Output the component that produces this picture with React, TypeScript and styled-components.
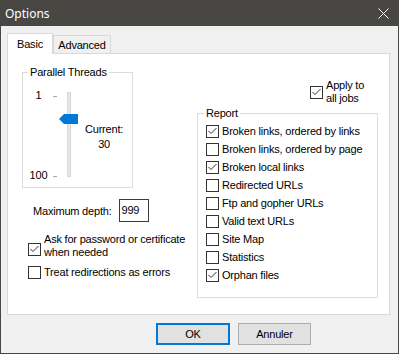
import React from 'react';
import styled, { createGlobalStyle } from 'styled-components';

const GlobalStyle = createGlobalStyle`
  html, body {
    margin: 0;
    padding: 0;
    background: #f0f0f0;
  }
  body {
    font-family: "Liberation Sans", Arial, sans-serif;
    font-size: 11px;
    letter-spacing: -0.2px;
    color: #000;
  }
`;

const Window = styled.div`
  width: 399px;
  height: 354px;
  box-sizing: border-box;
  border: 1px solid #484744;
  border-top: none;
  background: #f0f0f0;
  display: flex;
  flex-direction: column;
`;

const TitleBar = styled.div`
  height: 26px;
  background: #484744;
  display: flex;
  align-items: center;
  justify-content: space-between;
  padding: 0 9px 0 4px;
  color: #fff;
  font-family: "Noto Sans", "Open Sans", sans-serif;
  font-size: 12px;
  letter-spacing: 0;
`;

const TabStrip = styled.div`
  display: flex;
  align-items: flex-end;
  padding-left: 6px;
  margin-top: 7px;
  height: 20px;
`;

const Tab = styled.div<{ $active?: boolean; $width: number }>`
  position: relative;
  z-index: ${(p) => (p.$active ? 1 : 0)};
  box-sizing: border-box;
  width: ${(p) => p.$width}px;
  height: ${(p) => (p.$active ? 21 : 18)}px;
  margin-bottom: ${(p) => (p.$active ? -1 : 0)}px;
  border: 1px solid #d9d9d9;
  border-bottom: none;
  background: ${(p) => (p.$active ? '#fff' : '#f0f0f0')};
  display: flex;
  align-items: center;
  justify-content: center;
  padding-bottom: ${(p) => (p.$active ? 1 : 0)}px;
`;

const TabPanel = styled.div`
  margin: 0 8px 0 6px;
  height: 262px;
  box-sizing: border-box;
  border: 1px solid #d9d9d9;
  background: #fff;
  display: grid;
  grid-template-columns: 175px 181px;
  align-items: start;
  padding: 12px 0 0 14px;
`;

const Column = styled.div`
  display: flex;
  flex-direction: column;
  align-items: flex-start;
`;

const Group = styled.fieldset<{ $width: number; $padTop: number; $padBottom: number; $top?: number }>`
  box-sizing: border-box;
  width: ${(p) => p.$width}px;
  margin: ${(p) => p.$top ?? 0}px 0 0 0;
  padding: ${(p) => `${p.$padTop}px 0 ${p.$padBottom}px 0`};
  border: 1px solid #dcdcdc;
  min-width: 0;
`;

const Legend = styled.legend<{ $indent: number }>`
  padding: 0 2px;
  margin-left: ${(p) => p.$indent}px;
  line-height: 13px;
`;

const SliderRow = styled.div`
  display: flex;
  align-items: flex-start;
  padding-left: 5px;
`;

const ScaleLabels = styled.div`
  width: 21px;
  height: 93px;
  display: flex;
  flex-direction: column;
  justify-content: space-between;
  align-items: center;
  line-height: 13px;
`;

const Ticks = styled.div`
  width: 4px;
  height: 81px;
  margin: 7px 0 0 4px;
  display: flex;
  flex-direction: column;
  justify-content: space-between;
`;

const Tick = styled.div`
  height: 1px;
  background: #a8a8a8;
`;

const Track = styled.div`
  position: relative;
  box-sizing: border-box;
  width: 4px;
  height: 85px;
  margin: 3px 0 0 10px;
  background: #e7e7e7;
  border: 1px solid #d6d6d6;
`;

const Thumb = styled.svg`
  position: absolute;
  left: -9px;
  display: block;
`;

const CurrentBlock = styled.div`
  margin: 33px 0 0 14px;
  text-align: center;
  line-height: 15px;
`;

const DepthRow = styled.div`
  display: flex;
  align-items: center;
  margin: 11px 0 0 11px;
  gap: 7px;
`;

const NumberBox = styled.div`
  box-sizing: border-box;
  width: 30px;
  height: 23px;
  border: 1px solid #3c3c3c;
  background: #fff;
  padding: 0 0 0 2px;
  line-height: 21px;
`;

const CheckRow = styled.label<{ $top: number; $left: number }>`
  display: flex;
  align-items: center;
  gap: 3px;
  margin: ${(p) => `${p.$top}px 0 0 ${p.$left}px`};
  line-height: 13px;
`;

const Box = styled.span<{ $nudge?: number }>`
  box-sizing: border-box;
  flex: none;
  width: 13px;
  height: 13px;
  border: 1px solid #333;
  background: #fff;
  margin-top: ${(p) => p.$nudge ?? 0}px;
  display: flex;
`;

const ReportRow = styled.div`
  display: flex;
  align-items: center;
  gap: 3px;
  height: 18px;
  padding-left: 8px;
`;

const ButtonRow = styled.div`
  display: flex;
  gap: 8px;
  padding-left: 155px;
  margin-top: 8px;
`;

const Button = styled.div<{ $default?: boolean; $width: number }>`
  box-sizing: border-box;
  width: ${(p) => p.$width}px;
  height: 22px;
  border: ${(p) => (p.$default ? '2px solid #0078d7' : '1px solid #adadad')};
  background: #e1e1e1;
  display: flex;
  align-items: center;
  justify-content: center;
`;

const Check: React.FC<{ checked?: boolean; nudge?: number }> = ({ checked, nudge }) => (
  <Box $nudge={nudge}>
    {checked && (
      <svg width="11" height="11" viewBox="0 0 11 11">
        <polyline points="1.5,5 4,7.5 9.5,2" fill="none" stroke="#333" strokeWidth="1" />
      </svg>
    )}
  </Box>
);

const reportItems: [string, boolean][] = [
  ['Broken links, ordered by links', true],
  ['Broken links, ordered by page', false],
  ['Broken local links', true],
  ['Redirected URLs', false],
  ['Ftp and gopher URLs', false],
  ['Valid text URLs', false],
  ['Site Map', false],
  ['Statistics', false],
  ['Orphan files', true],
];

const threads = { min: 1, max: 100, current: 30 };

export default function App() {
  // thumb offset inside the track for the current value
  const thumbTop = Math.round(((threads.current - threads.min) / (threads.max - threads.min)) * 71);
  return (
    <>
      <GlobalStyle />
      <Window>
        <TitleBar>
          <span>Options</span>
          <svg width="11" height="11" viewBox="0 0 11 11">
            <path d="M0.5 0.5 L10.5 10.5 M10.5 0.5 L0.5 10.5" stroke="#fff" strokeWidth="1" />
          </svg>
        </TitleBar>

        <TabStrip>
          <Tab $active $width={46}>Basic</Tab>
          <Tab $width={58}>Advanced</Tab>
        </TabStrip>

        <TabPanel>
          <Column>
            <Group $width={111} $padTop={10} $padBottom={5}>
              <Legend $indent={5}>Parallel Threads</Legend>
              <SliderRow>
                <ScaleLabels>
                  <span>{threads.min}</span>
                  <span>{threads.max}</span>
                </ScaleLabels>
                <Ticks>
                  <Tick />
                  <Tick />
                </Ticks>
                <Track>
                  <Thumb width="19" height="10" viewBox="0 0 19 10" style={{ top: thumbTop }}>
                    <polygon points="0,5 5,0 19,0 19,10 5,10" fill="#0078d7" />
                  </Thumb>
                </Track>
                <CurrentBlock>
                  Current:
                  <br />
                  {threads.current}
                </CurrentBlock>
              </SliderRow>
            </Group>

            <DepthRow>
              <span>Maximum depth:</span>
              <NumberBox>999</NumberBox>
            </DepthRow>

            <CheckRow $top={11} $left={6}>
              <Check checked nudge={6} />
              <span>
                Ask for password or certificate
                <br />
                when needed
              </span>
            </CheckRow>

            <CheckRow $top={7} $left={6}>
              <Check />
              <span>Treat redirections as errors</span>
            </CheckRow>
          </Column>

          <Column>
            <CheckRow $top={13} $left={113}>
              <Check checked />
              <span>
                Apply to
                <br />
                all jobs
              </span>
            </CheckRow>

            <Group $width={181} $padTop={2} $padBottom={13} $top={2}>
              <Legend $indent={6}>Report</Legend>
              {reportItems.map(([label, checked]) => (
                <ReportRow key={label}>
                  <Check checked={checked} />
                  <span>{label}</span>
                </ReportRow>
              ))}
            </Group>
          </Column>
        </TabPanel>

        <ButtonRow>
          <Button $default $width={74}>OK</Button>
          <Button $width={73}>Annuler</Button>
        </ButtonRow>
      </Window>
    </>
  );
}
